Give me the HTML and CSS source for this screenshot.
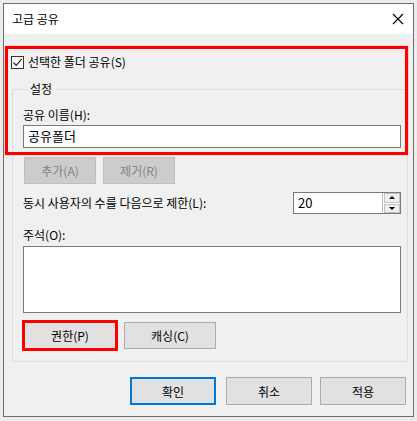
FILE: index.html
```html
<!DOCTYPE html>
<html>
	<head>
		<meta charset="UTF-8">
		<title>고급 공유</title>
		<link rel="stylesheet" href="styles.css">
	</head>
	<body>
        <div class="window">
            <div class="titlebar">
                <span class="title">고급 공유</span>
                <svg class="close" width="12" height="12" viewBox="0 0 12 12"><path d="M1 1L11 11M11 1L1 11" stroke="#000" stroke-width="1.1" fill="none"/></svg>
            </div>
            <div class="content">
                <label class="check-row">
                    <span class="checkbox"><svg width="11" height="11" viewBox="0 0 11 11"><path d="M1.5 5.5L4.2 8.3L9.6 2.2" stroke="#222" stroke-width="1.2" fill="none"/></svg></span>
                    선택한 폴더 공유(S)
                </label>
                <fieldset class="group">
                    <legend>설정</legend>
                    <div class="label first">공유 이름(H):</div>
                    <div class="textbox">공유폴더</div>
                    <div class="btn-row">
                        <button class="btn small" disabled>추가(A)</button>
                        <button class="btn small" disabled>제거(R)</button>
                    </div>
                    <div class="limit-row">
                        <span>동시 사용자의 수를 다음으로 제한(L):</span>
                        <div class="spin">
                            <span class="spin-value">20</span>
                            <span class="spin-btns">
                                <span class="spin-btn"><i class="up"></i></span>
                                <span class="spin-btn"><i class="down"></i></span>
                            </span>
                        </div>
                    </div>
                    <div class="label note">주석(O):</div>
                    <div class="memo"></div>
                    <div class="btn-row low">
                        <button class="btn mid marked">권한(P)</button>
                        <button class="btn mid">캐싱(C)</button>
                    </div>
                </fieldset>
                <div class="footer">
                    <button class="btn wide default">확인</button>
                    <button class="btn wide">취소</button>
                    <button class="btn wide">적용</button>
                </div>
            </div>
            <div class="mark"></div> <!-- 빨간 표시 상자 -->
        </div>
	</body>
</html>
```

FILE: styles.css
```css
*{
    margin: 0;
    padding: 0;
    box-sizing: border-box;
}
body{
    background: #ececec;
    font-family: "Noto Sans CJK KR", "Noto Sans", sans-serif;
    font-size: 12px;
    line-height: 16px;
    color: #000;
}
.window{
    position: relative;
    width: 411px;
    height: 414px;
    margin: 3px 0 0 3px;
    border: 1px solid #6e6e6e;
    background: #f0f0f0;
    display: flex;
    flex-direction: column;
}
.titlebar{
    height: 30px;
    background: #fff;
    display: flex;
    align-items: center;
    justify-content: space-between;
    padding: 0 8px 0 8px;
}
.close{
    margin-right: 1px;
}
.content{
    padding: 18px 5px 0 8px;
}
.check-row{
    display: flex;
    align-items: center;
    gap: 4px;
    height: 20px;
    margin-left: -1px;
}
.checkbox{
    width: 13px;
    height: 13px;
    border: 1px solid #333;
    background: #fff;
    display: flex;
    align-items: center;
    justify-content: center;
}
.group{
    margin-top: 9px;
    border: 1px solid #dcdcdc;
    padding: 0 6px 12px 10px;
    min-width: 0;
}
.group legend{
    margin-left: 4px;
    padding: 0 3px;
    line-height: 16px;
}
.label.first{
    margin-top: 10px;
}
.textbox{
    margin-top: 2px;
    height: 23px;
    border: 1px solid #7a7a7a;
    background: #fff;
    padding: 2px 4px;
    font-size: 13px;
}
.btn-row{
    display: flex;
    gap: 7px;
    margin-top: 9px;
    padding-left: 1px;
}
.btn-row.low{
    gap: 8px;
}
.btn{
    font-family: inherit;
    font-size: 12px;
    background: #e1e1e1;
    border: 1px solid #adadad;
    color: #000;
    height: 27px;
}
.btn:disabled{
    background: #cccccc;
    border-color: #bfbfbf;
    color: #838383;
}
.btn.small{
    width: 72px;
}
.btn.mid{
    width: 92px;
}
.btn.marked{
    outline: 3px solid #ff0000;
    outline-offset: -1px;
}
.limit-row{
    margin-top: 8px;
    display: flex;
    align-items: center;
    justify-content: space-between;
}
.spin{
    width: 108px;
    height: 22px;
    display: flex;
    border: 1px solid #7a7a7a;
    background: #fff;
}
.spin-value{
    flex: 1;
    padding: 2px 4px;
    font-size: 13px;
}
.spin-btns{
    width: 18px;
    display: flex;
    flex-direction: column;
    gap: 1px;
    padding: 0 0 0 1px;
    background: #fff;
    border-left: 1px solid #b8b8b8;
}
.spin-btn{
    flex: 1;
    background: #f0f0f0;
    border: 1px solid #c4c4c4;
    display: flex;
    align-items: center;
    justify-content: center;
}
.spin-btn i{
    width: 0;
    height: 0;
    border-left: 3px solid transparent;
    border-right: 3px solid transparent;
}
.spin-btn .up{
    border-bottom: 3px solid #000;
}
.spin-btn .down{
    border-top: 3px solid #000;
}
.label.note{
    margin-top: 13px;
}
.memo{
    margin-top: 3px;
    height: 67px;
    border: 1px solid #7a7a7a;
    background: #fff;
}
.footer{
    display: flex;
    justify-content: flex-end;
    gap: 8px;
    margin-top: 15px;
    padding-right: 2px;
}
.btn.wide{
    width: 86px;
    height: 28px;
}
.btn.default{
    border: 2px solid #0078d7;
    margin-right: 2px;
}
.mark{
    position: absolute;
    left: 1px;
    top: 42px;
    width: 403px;
    height: 109px;
    border: 3px solid #ff0000;
    box-shadow: 0 0 1px rgba(255,0,0,0.6);
}
```
